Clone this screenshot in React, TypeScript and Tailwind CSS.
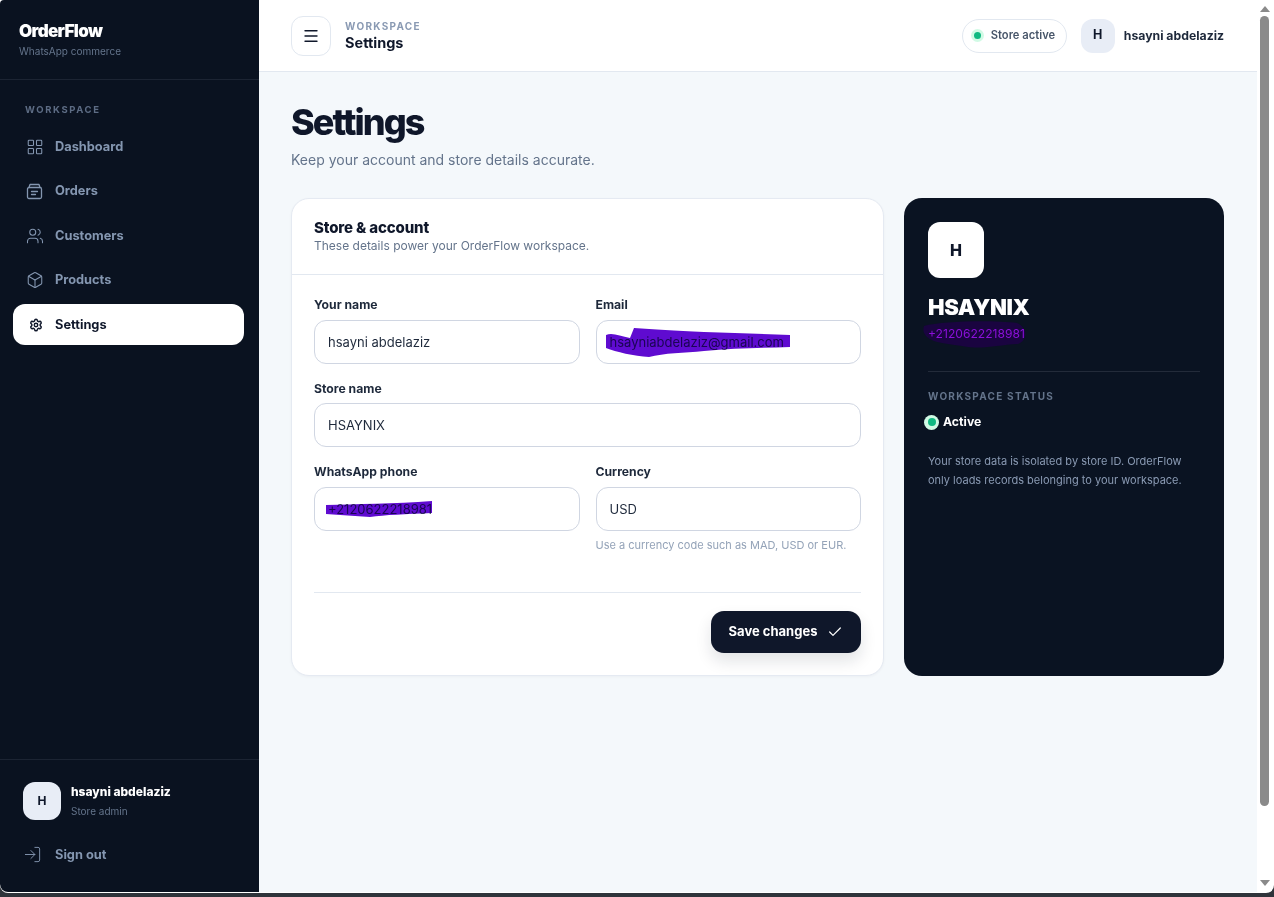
import React from 'react';
import { Box, Check, LayoutGrid, LogIn, Menu, Settings, Users } from 'lucide-react';

const navItems = [
  { id: 'dashboard', label: 'Dashboard' },
  { id: 'orders', label: 'Orders' },
  { id: 'customers', label: 'Customers' },
  { id: 'products', label: 'Products' },
];

function OrdersIcon() {
  return (
    <svg width="17" height="17" viewBox="0 0 17 17" fill="none" stroke="currentColor" strokeWidth="1.3" strokeLinecap="round" strokeLinejoin="round">
      <path d="M3 4.5 4 1.5h9l1 3" />
      <rect x="1.5" y="4.5" width="14" height="11" rx="1.5" />
      <path d="M5.5 8.5h6M5.5 11.5h4" />
    </svg>
  );
}

function NavIcon({ id }: { id: string }) {
  if (id === 'dashboard') return <LayoutGrid size={18} strokeWidth={1.4} />;
  if (id === 'orders') return <OrdersIcon />;
  if (id === 'customers') return <Users size={18} strokeWidth={1.4} />;
  return <Box size={18} strokeWidth={1.4} />;
}

function Sidebar() {
  return (
    <aside className="w-[259px] shrink-0 bg-[#0a1220] flex flex-col rounded-bl-lg rounded-tl-sm">
      <div className="h-[80px] border-b border-[#1c2433] pl-[19px] pt-[21px]">
        <div className="text-[17px] leading-[21px] font-black tracking-[-0.04em] text-white">OrderFlow</div>
        <div className="text-[10px] leading-[14px] mt-[2px] text-[#64748b]">WhatsApp commerce</div>
      </div>

      <nav className="flex-1 pl-[13px] pr-[15px] pt-[23px]">
        <div className="pl-[12px] text-[9.5px] leading-[14px] font-bold tracking-[0.17em] text-[#5d6c84] mb-[9px]">WORKSPACE</div>
        <div className="flex flex-col gap-[3.5px]">
          {navItems.map((item) => (
            <a key={item.id} className="h-[41px] flex items-center pl-[13px] text-[#8496b0] text-[12.8px] font-bold">
              <span className="w-[29px] flex items-center"><NavIcon id={item.id} /></span>
              {item.label}
            </a>
          ))}
          <a className="h-[41px] flex items-center pl-[16px] rounded-[12px] bg-white text-[#0f172a] text-[12.8px] font-bold">
            <span className="w-[26px] flex items-center"><Settings size={14} strokeWidth={2.5} /></span>
            Settings
          </a>
        </div>
      </nav>

      <div className="h-[133px] border-t border-[#1c2433] pl-[23px] pt-[22px]">
        <div className="flex gap-[10px]">
          <div className="w-[38px] h-[38px] rounded-[12px] bg-[#e8edf6] flex items-center justify-center text-[#0f172a] text-[12px] font-bold">H</div>
          <div className="pt-[1px]">
            <div className="text-[12px] leading-[18px] font-extrabold text-white">hsayni abdelaziz</div>
            <div className="text-[10px] leading-[14px] mt-[3px] text-[#64748b]">Store admin</div>
          </div>
        </div>
        <div className="flex items-center mt-[25px] text-[#8496b0] text-[12.8px] font-bold">
          <span className="w-[32px] flex items-center"><LogIn size={19} strokeWidth={1.2} /></span>
          Sign out
        </div>
      </div>
    </aside>
  );
}

function Header() {
  return (
    <header className="h-[72px] shrink-0 bg-white border-b border-[#e2e8f0] flex items-center pl-[32px] pr-[33px]">
      <button className="w-[40px] h-[40px] rounded-[12px] border border-[#e2e8f0] flex items-center justify-center text-[#0f172a]">
        <Menu size={18} strokeWidth={1.8} />
      </button>
      <div className="ml-[14px] pt-[2px]">
        <div className="text-[10px] leading-[12px] font-bold tracking-[0.13em] text-[#8a9ab3]">WORKSPACE</div>
        <div className="text-[14.5px] leading-[20px] mt-[1px] font-bold text-[#0f172a]">Settings</div>
      </div>
      <div className="ml-auto h-[34px] w-[105px] rounded-full border border-[#e2e8f0] flex items-center pl-[10px] text-[11.2px] font-semibold text-[#475569]">
        <span className="w-[7px] h-[7px] mx-[1px] rounded-full bg-[#10b981] ring-[3px] ring-[#d1fae5]" />
        <span className="ml-[9px]">Store active</span>
      </div>
      <div className="ml-[14px] w-[34px] h-[34px] rounded-[12px] bg-[#e8edf6] flex items-center justify-center text-[#0f172a] text-[12.5px] font-bold">H</div>
      <div className="ml-[9px] pt-[1px] text-[12.25px] font-bold text-[#1e293b]">hsayni abdelaziz</div>
    </header>
  );
}

interface FieldProps {
  label: string;
  value: string;
  className?: string;
  labelGap?: string;
  textColor?: string;
  children?: React.ReactNode;
}

function Field({ label, value, className, labelGap = 'mb-[6px]', textColor = 'text-[#1e293b]', children }: FieldProps) {
  return (
    <div className={className}>
      <label className={`block text-[12.2px] leading-[18px] font-bold text-[#1e293b] ${labelGap}`}>{label}</label>
      <div className="relative">
        <input
          readOnly
          value={value}
          className={`w-full h-[44px] rounded-[12px] border border-[#d0d6e2] bg-white px-[13px] text-[13px] outline-none ${textColor}`}
        />
        {children}
      </div>
    </div>
  );
}

function SettingsForm() {
  return (
    <section className="flex-1 h-[478px] bg-white rounded-[18px] border border-[#e5eaf2] shadow-[0_1px_3px_rgba(15,23,42,0.04)]">
      <div className="h-[76px] border-b border-[#e2e8f0] pl-[22px] pt-[19px]">
        <h2 className="text-[15px] leading-[20px] font-extrabold tracking-[-0.01em] text-[#0f172a]">Store &amp; account</h2>
        <p className="text-[12px] leading-[16px] text-[#64748b]">These details power your OrderFlow workspace.</p>
      </div>
      <div className="px-[22px] pt-[21px]">
        <div className="grid grid-cols-2 gap-x-[16px]">
          <Field label="Your name" value="hsayni abdelaziz" />
          <Field label="Email" value="hsayniabdelaziz@gmail.com" textColor="text-[#475569]">
            <svg className="absolute left-[8px] top-[6px] mix-blend-multiply" width="190" height="32" viewBox="0 0 190 32" fill="#5f0bd0">
              <path d="M2 9 C8 6 16 10 26 12 L30 2 C50 3 70 5 100 6 C130 7 160 8 186 9 L186 21 C160 22 130 22 100 25 C80 27 60 27 45 31 C30 30 12 26 2 22 Z" />
            </svg>
          </Field>
          <Field className="col-span-2 mt-[16px]" label="Store name" value="HSAYNIX" labelGap="mb-[5px]" />
          <Field className="mt-[16px]" label="WhatsApp phone" value="+2120622218981" textColor="text-[#475569]">
            <svg className="absolute left-[11px] top-[12px] mix-blend-multiply" width="108" height="20" viewBox="0 0 108 20" fill="#5f0bd0">
              <path d="M1 6 C30 5 70 5 107 2 L107 14 C80 15 60 16 45 18 C30 17 15 16 1 15 Z" />
            </svg>
          </Field>
          <div className="mt-[16px]">
            <Field label="Currency" value="USD" />
            <p className="mt-[7px] text-[11px] leading-[14px] text-[#94a3b8]">Use a currency code such as MAD, USD or EUR.</p>
          </div>
        </div>
        <div className="mt-[40px] pt-[18px] border-t border-[#e2e8f0] flex justify-end">
          <button className="w-[150px] h-[42px] rounded-[13px] bg-[#0f172a] text-white text-[13px] font-bold flex items-center justify-center gap-[10px] shadow-[0_8px_16px_rgba(15,23,42,0.12)]">
            Save changes
            <Check size={16} strokeWidth={1.8} />
          </button>
        </div>
      </div>
    </section>
  );
}

function StoreCard() {
  return (
    <aside className="w-[320px] shrink-0 h-[478px] bg-[#0a1322] rounded-[18px] px-[24px] pt-[24px]">
      <div className="w-[56px] h-[56px] rounded-[12px] bg-white flex items-center justify-center text-[#0f172a] text-[16px] font-extrabold">H</div>
      <div className="mt-[15px] text-[22px] leading-[28px] font-black tracking-[-0.015em] text-white">HSAYNIX</div>
      <div className="relative mt-[4px] text-[12.1px] leading-[17px] text-[#8a10d8]">
        <svg className="absolute -left-[6px] -top-[5px]" width="108" height="30" viewBox="0 0 108 30" fill="#1a0440">
          <path d="M2 6 C20 1 70 0 95 3 C106 8 106 20 96 24 C75 25 60 30 40 26 C25 24 12 22 10 20 C3 17 0 12 2 6 Z" />
        </svg>
        <span className="relative">+2120622218981</span>
      </div>
      <div className="mt-[29px] pt-[17px] border-t border-[#232b3a]">
        <div className="text-[10px] leading-[14px] font-bold tracking-[0.125em] text-[#64748b]">WORKSPACE STATUS</div>
        <div className="mt-[11px] -ml-[4px] flex items-center gap-[4px] text-[12.25px] leading-[16px] font-bold text-white">
          <span className="w-[15px] h-[15px] rounded-full bg-[#d1fae5] flex items-center justify-center">
            <span className="w-[8px] h-[8px] rounded-full bg-[#10b981]" />
          </span>
          Active
        </div>
        <p className="mt-[22px] text-[11px] leading-[19px] text-[#8a9ab3]">
          Your store data is isolated by store ID. OrderFlow only loads records belonging to your workspace.
        </p>
      </div>
    </aside>
  );
}

function Scrollbar() {
  return (
    <div className="w-[15px] shrink-0 bg-white flex flex-col items-center pt-[6px] pb-[6px]">
      <div className="w-0 h-0 border-x-[5px] border-x-transparent border-b-[6px] border-b-[#8a8a8a]" />
      <div className="mt-[4px] w-[9px] h-[790px] rounded-full bg-[#8a8a8a]" />
      <div className="mt-auto w-0 h-0 border-x-[5px] border-x-transparent border-t-[6px] border-t-[#8a8a8a]" />
    </div>
  );
}

export default function App() {
  return (
    <div className="w-[1274px] h-[897px] overflow-hidden bg-[#2f343b] flex flex-col font-['Inter',sans-serif]">
      <div className="h-[893px] flex bg-white pr-[2px] pb-[1px] rounded-b-lg overflow-hidden">
        <Sidebar />
        <div className="flex-1 min-w-0 flex flex-col bg-[#f4f8fb]">
          <Header />
          <main className="pl-[32px] pr-[33px] pt-[28px]">
            <h1 className="text-[36px] leading-[44px] font-extrabold tracking-[-0.055em] text-[#0f172a]">Settings</h1>
            <p className="mt-[5px] text-[14px] leading-[22px] text-[#64748b]">Keep your account and store details accurate.</p>
            <div className="mt-[27px] flex gap-[20px]">
              <SettingsForm />
              <StoreCard />
            </div>
          </main>
        </div>
        <Scrollbar />
      </div>
    </div>
  );
}
